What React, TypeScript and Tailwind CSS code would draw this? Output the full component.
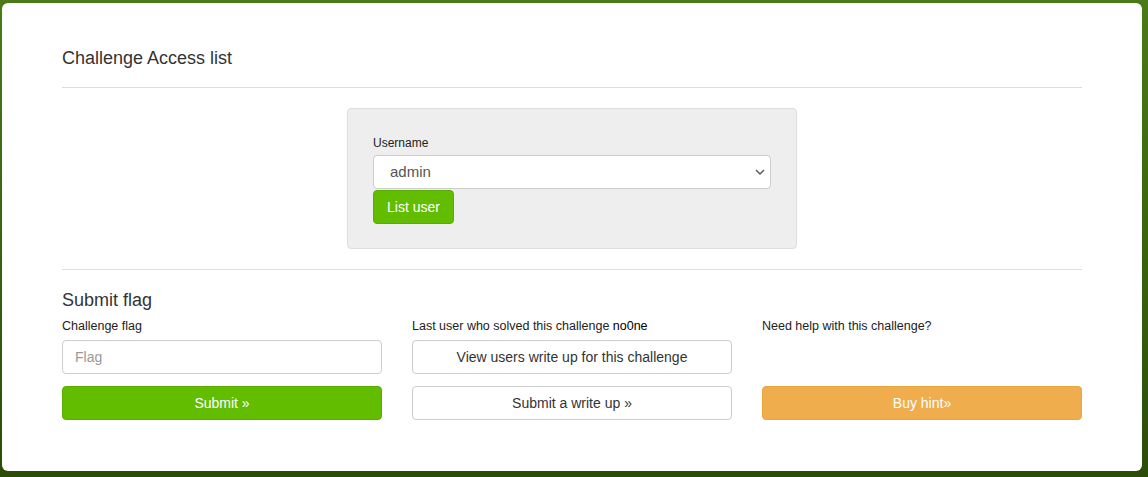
import React from "react";

const font = { fontFamily: '"Liberation Sans", Arial, sans-serif' };

export default function App() {
  return (
    <div
      className="w-full h-[477px] pt-[3px] pl-[2px] bg-[linear-gradient(180deg,#4b7a16_0%,#3a6410_50%,#2c4c0a_100%)]"
      style={font}
    >
      <div className="w-[1140px] h-[468px] bg-white rounded-md px-[60px] pt-[45px] text-[#333]">
        <h3 className="text-[18px] leading-5 text-[#333]">Challenge Access list</h3>
        <hr className="mt-[19px] border-t border-[#ddd]" />

        {/* access list form */}
        <div className="mx-auto mt-[20px] w-[450px] h-[141px] bg-[#eeeeee] border border-[#ddd] rounded-[4px] pl-[25px] pr-[25px] pt-[26px]">
          <label className="block text-[12px] leading-4 text-[#222]">Username</label>
          <div className="relative mt-[4px]">
            <select className="w-full h-[34px] appearance-none bg-white border border-[#ccc] rounded-[4px] pl-[16px] text-[15px] text-[#555] outline-none">
              <option>admin</option>
            </select>
            <svg
              className="absolute right-[6px] top-[13px] w-[10px] h-[8px] pointer-events-none"
              viewBox="0 0 10 8"
              fill="none"
              stroke="#555"
              strokeWidth="1.4"
            >
              <path d="M1 2l4 4 4-4" />
            </svg>
          </div>
          <button className="block mt-px h-[34px] px-[13px] bg-[#62bd00] border border-[#5aad00] rounded-[4px] text-white text-[14px]">
            List user
          </button>
        </div>

        <hr className="mt-[20px] border-t border-[#ddd]" />

        <h3 className="mt-[20px] text-[18px] leading-5 text-[#333]">Submit flag</h3>
        <div className="grid grid-cols-3 gap-[30px] mt-[8px]">
          <div className="flex flex-col">
            <label className="text-[12.5px] leading-4 text-[#222]">Challenge flag</label>
            <input
              placeholder="Flag"
              className="mt-[6px] h-[34px] border border-[#ccc] rounded-[4px] px-[12px] text-[14px] text-[#555] placeholder:text-[#999] outline-none"
            />
            <button className="mt-[12px] h-[34px] bg-[#62bd00] border border-[#5aad00] rounded-[4px] text-white text-[14px]">
              Submit »
            </button>
          </div>
          <div className="flex flex-col">
            <label className="text-[12.5px] leading-4 text-[#222]">
              Last user who solved this challenge <span className="text-black">no0ne</span>
            </label>
            <button className="mt-[6px] h-[34px] bg-white border border-[#ccc] rounded-[4px] text-[14px] text-[#333]">
              View users write up for this challenge
            </button>
            <button className="mt-[12px] h-[34px] bg-white border border-[#ccc] rounded-[4px] text-[14px] text-[#333]">
              Submit a write up »
            </button>
          </div>
          <div className="flex flex-col">
            <label className="text-[12.5px] leading-4 text-[#222]">Need help with this challenge?</label>
            <div className="mt-[6px] h-[34px]" />
            <button className="mt-[12px] h-[34px] bg-[#efad4e] border border-[#eaa53f] rounded-[4px] text-white text-[14px]">
              Buy hint»
            </button>
          </div>
        </div>
      </div>
    </div>
  );
}
